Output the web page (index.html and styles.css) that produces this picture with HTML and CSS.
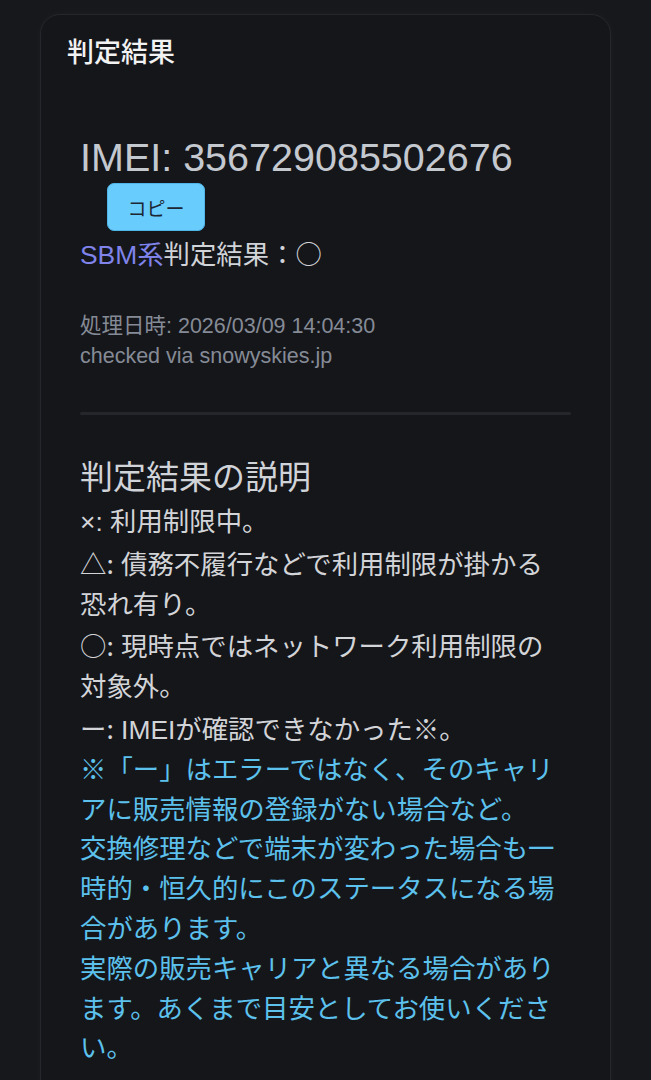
FILE: index.html
```html
<!DOCTYPE html>
<html lang="ja">
<head>
  <meta charset="UTF-8" />
  <title>判定結果</title>
  <link rel="stylesheet" href="styles.css">
</head>
<body>

<div class="card">
  <div class="card-header">判定結果</div>

  <div class="card-body">
    <!-- IMEI + copy -->
    <div class="imei">IMEI: 356729085502676</div>
    <button class="copy-btn">コピー</button>
    <div class="verdict"><span class="carrier">SBM系</span>判定結果：<span class="sym">○</span></div>

    <div class="meta">
      <div>処理日時: 2026/03/09 14:04:30</div>
      <div>checked via snowyskies.jp</div>
    </div>

    <hr class="divider" />

    <!-- Legend -->
    <h3>判定結果の説明</h3>
    <div class="notes">
      <div>×: 利用制限中。</div>
      <div><span class="sym">△:</span> 債務不履行などで利用制限が掛かる恐れ有り。</div>
      <div><span class="sym">○:</span> 現時点ではネットワーク利用制限の対象外。</div>
      <div><span class="sym">ー:</span> IMEIが確認できなかった※。</div>
      <div class="note-blue">※「ー」はエラーではなく、そのキャリアに販売情報の登録がない場合など。</div>
      <div class="note-blue">交換修理などで端末が変わった場合も一時的・恒久的にこのステータスになる場合があります。</div>
      <div class="note-blue">実際の販売キャリアと異なる場合があります。あくまで目安としてお使いください。</div>
    </div>
  </div>
</div>

</body>
</html>
```

FILE: styles.css
```css
body {
  margin: 0;
  background: #17181c;
  font-family: "Liberation Sans", "Noto Sans CJK JP", sans-serif;
  color: #d4d6da;
}
.card {
  margin: 14px 40px 0 40px;
  background: #15161a;
  border: 1px solid #25272c;
  border-radius: 20px;
  box-shadow: 0 0 10px rgba(255,255,255,0.03);
  min-height: 1100px;
}
.card-header {
  padding: 18px 26px 0;
  font-size: 27px;
  line-height: 40px;
  font-weight: 500;
  color: #f2f2f2;
}
.card-body {
  padding: 60px 39px 0;
}
.imei {
  font-size: 39.5px;
  line-height: 48px;
  color: #c4c8cf;
}
.copy-btn {
  display: block;
  margin: 2px 0 0 27px;
  width: 98px;
  height: 48px;
  background: #68cdfd;
  color: #1c2733;
  border: 1px solid #4fb4e6;
  border-radius: 7px;
  font-family: "Noto Sans CJK JP", sans-serif;
  font-size: 19px;
  padding: 0;
}
.verdict {
  margin-top: 2px;
  font-size: 26.4px;
  line-height: 40px;
  color: #d0d3d8;
}
.carrier { color: #7f83ea; }
.sym { font-family: "Noto Sans CJK JP", sans-serif; }
.meta {
  margin-top: 37px;
  font-size: 21.5px;
  line-height: 29.5px;
  color: #858b96;
}
.divider {
  margin: 41px 0 0;
  border: none;
  height: 3px;
  background: #24262c;
  border-radius: 2px;
}
h3 {
  margin: 38px 0 0;
  font-size: 33px;
  line-height: 50px;
  font-weight: normal;
  color: #d0d3d8;
}
.notes {
  padding-right: 8px;
  font-size: 26.4px;
  line-height: 39.8px;
  color: #d2d4d8;
}
.note-blue { color: #5cc1ec; }
```
